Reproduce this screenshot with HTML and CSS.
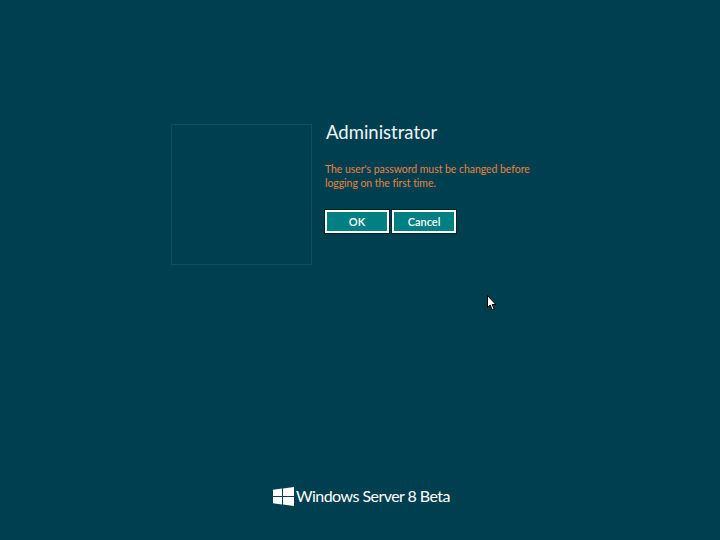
FILE: index.html
```html
<!DOCTYPE html>
<html lang="en">
<head>
<meta charset="utf-8">
<title>Windows Server 8 Beta</title>
<link rel="stylesheet" href="styles.css">
</head>
<body>
<main class="screen">
  <section class="account">
    <div class="tile"></div>
    <div class="details">
      <h1 class="name">Administrator</h1>
      <p class="message">The user's password must be changed before<br>logging on the first time.</p>
      <div class="actions">
        <button class="btn">OK</button>
        <button class="btn">Cancel</button>
      </div>
    </div>
  </section>
  <footer class="brand">
    <svg class="logo" width="21" height="19" viewBox="0 0 21 19" aria-hidden="true">
      <path fill="#fff" d="M0 2.8 9 1.5V9H0zM10 1.4 21 0v9H10zM0 10h9v7.5L0 16.2zM10 10h11v9L10 17.6z"/>
    </svg>
    <span class="product">Windows Server 8 Beta</span>
  </footer>
  <svg class="pointer" width="10" height="16" viewBox="0 0 10 16" aria-hidden="true">
    <path fill="#fff" stroke="#000" stroke-width="1" d="M.5.5V12.5L3.2 10 5.2 14.8 7.2 14 5.2 9.5H8.8z"/>
  </svg>
</main>
</body>
</html>
```

FILE: styles.css
```css
* { box-sizing: border-box; }
html, body { margin: 0; padding: 0; }
body { background: #003f50; }
.screen {
  position: relative;
  width: 720px;
  height: 540px;
  overflow: hidden;
  display: flex;
  flex-direction: column;
  background: #003f50;
  font-family: "Lato", "Open Sans", sans-serif;
}
.account {
  display: flex;
  gap: 13px;
  padding: 124px 0 0 171px;
}
.tile {
  width: 141px;
  height: 141px;
  border: 1px solid #0e4f5f;
}
.details { display: flex; flex-direction: column; }
.name {
  margin: -4px 0 0 1px;
  font-size: 18.5px;
  line-height: 24px;
  font-weight: 400;
  color: #eef5f7;
}
.message {
  margin: 18px 0 0 0;
  font-size: 10.5px;
  line-height: 14px;
  letter-spacing: -0.05px;
  color: #e5843f;
}
.actions {
  display: flex;
  gap: 3px;
  margin-top: 20px;
}
.btn {
  width: 64px;
  height: 23px;
  padding: 0;
  border: 2px solid #fff;
  outline: 1px solid #00242e;
  border-radius: 0;
  background: #008083;
  color: #fff;
  font-family: inherit;
  font-size: 11px;
  font-weight: 600;
}
.brand {
  margin-top: auto;
  margin-bottom: 34px;
  padding-left: 3px;
  display: flex;
  align-items: center;
  justify-content: center;
  gap: 2px;
  color: #fff;
}
.logo { flex: none; }
.product {
  font-size: 16px;
  line-height: 20px;
  letter-spacing: -0.55px;
}
.pointer {
  position: absolute;
  left: 487px;
  top: 295px;
}
```
